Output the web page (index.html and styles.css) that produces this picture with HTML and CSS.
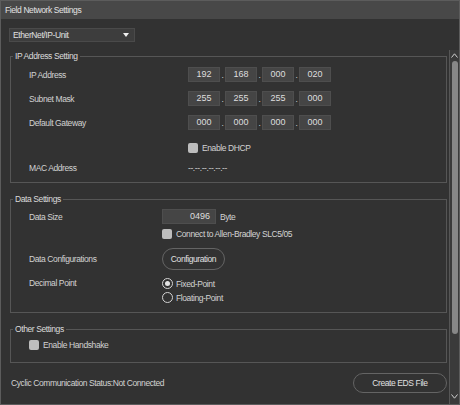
FILE: index.html
```html
<!DOCTYPE html>
<html>
  <head>
    <meta charset="UTF-8" />
    <title>Field Network Settings</title>
    <link rel="stylesheet" href="styles.css">
  </head>
  <body>
    <div class="window">
      <div class="titlebar">Field Network Settings</div>
      <div class="body">
        <div class="pane">
          <div class="select">
            <span>EtherNet/IP-Unit</span>
            <span class="caret"></span>
          </div>

          <fieldset class="group group-ip">
            <legend>IP Address Setting</legend>
            <div class="row row-field">
              <span class="label">IP Address</span>
              <div class="ip">
                <span class="octet">192</span><span class="dot">.</span><span class="octet">168</span><span class="dot">.</span><span class="octet">000</span><span class="dot">.</span><span class="octet">020</span>
              </div>
            </div>
            <div class="row row-field">
              <span class="label">Subnet Mask</span>
              <div class="ip">
                <span class="octet">255</span><span class="dot">.</span><span class="octet">255</span><span class="dot">.</span><span class="octet">255</span><span class="dot">.</span><span class="octet">000</span>
              </div>
            </div>
            <div class="row row-field">
              <span class="label">Default Gateway</span>
              <div class="ip">
                <span class="octet">000</span><span class="dot">.</span><span class="octet">000</span><span class="dot">.</span><span class="octet">000</span><span class="dot">.</span><span class="octet">000</span>
              </div>
            </div>
            <div class="row row-dhcp">
              <span class="label"></span>
              <span class="check"></span><span>Enable DHCP</span>
            </div>
            <div class="row row-mac">
              <span class="label">MAC Address</span>
              <span>--.--.--.--.--.--</span>
            </div>
          </fieldset>

          <fieldset class="group group-data">
            <legend>Data Settings</legend>
            <div class="row row-field">
              <span class="label">Data Size</span>
              <span class="numbox">0496</span><span class="unit">Byte</span>
            </div>
            <div class="row row-connect">
              <span class="label"></span>
              <span class="check"></span><span>Connect to Allen-Bradley SLC5/05</span>
            </div>
            <div class="row row-config">
              <span class="label">Data Configurations</span>
              <span class="pill pill-config">Configuration</span>
            </div>
            <div class="row row-decimal">
              <span class="label">Decimal Point</span>
              <div class="radios">
                <div class="radio-item"><span class="radio checked"></span>Fixed-Point</div>
                <div class="radio-item"><span class="radio"></span>Floating-Point</div>
              </div>
            </div>
          </fieldset>

          <fieldset class="group group-other">
            <legend>Other Settings</legend>
            <div class="row row-handshake">
              <span class="check"></span><span>Enable Handshake</span>
            </div>
          </fieldset>

          <div class="status-row">
            <span>Cyclic Communication Status:Not Connected</span>
            <span class="pill pill-eds">Create EDS File</span>
          </div>
        </div>

        <div class="scrollbar">
          <span class="arrow">
            <svg width="7" height="5" viewBox="0 0 7 5"><polyline points="0.5,4.5 3.5,0.8 6.5,4.5" fill="none" stroke="#d0d0d0" stroke-width="1"/></svg>
          </span>
          <div class="thumb"></div>
          <div class="track-rest"></div>
          <span class="arrow">
            <svg width="7" height="5" viewBox="0 0 7 5"><polyline points="0.5,0.5 3.5,4.2 6.5,0.5" fill="none" stroke="#d0d0d0" stroke-width="1"/></svg>
          </span>
        </div>
      </div>
    </div>
  </body>
</html>
```

FILE: styles.css
```css
body {
  margin: 0;
  background: #323232;
}

.window {
  width: 460px;
  height: 405px;
  box-sizing: border-box;
  border: 1px solid #5c5c5c;
  background: #323232;
  display: flex;
  flex-direction: column;
  font-family: "Liberation Sans", Arial, sans-serif;
  font-size: 8.5px;
  letter-spacing: -0.4px;
  color: #d2d2d2;
}

.titlebar {
  flex: none;
  height: 18px;
  line-height: 18px;
  padding-left: 4px;
  background: #484848;
  color: #e2e2e2;
}

.body {
  flex: 1;
  display: flex;
  min-height: 0;
}

.pane {
  flex: 1;
  padding: 9px 2px 0 8px;
}

/* dropdown */
.select {
  width: 126px;
  height: 14px;
  box-sizing: border-box;
  background: #3d3d3d;
  border: 1px solid #4a4a4a;
  display: flex;
  align-items: center;
  justify-content: space-between;
  padding: 0 5px 0 3px;
  color: #e0e0e0;
}

.caret {
  width: 0;
  height: 0;
  border-left: 3px solid transparent;
  border-right: 3px solid transparent;
  border-top: 4px solid #f0f0f0;
}

/* group boxes */
.group {
  margin: 9px 0 0 1px;
  padding: 6px 0 8px 2px;
  border: 1px solid #565656;
  min-width: 0;
}

.group legend {
  padding: 0 2px;
  line-height: 10px;
  height: 10px;
  color: #dcdcdc;
}

.group-data {
  margin-top: 11px;
  padding-top: 5px;
}

.group-other {
  margin-top: 11px;
  padding-top: 4px;
  padding-bottom: 10px;
}

.row {
  display: flex;
  align-items: center;
  padding-left: 16px;
}

.label {
  flex: none;
  width: 159px;
}

.group-data .label {
  width: 133px;
}

.row-field {
  height: 15px;
}

.row-field + .row-field {
  margin-top: 9px;
}

.row-dhcp {
  height: 12px;
  margin-top: 12px;
}

.row-mac {
  height: 12px;
  margin-top: 8px;
}

.row-connect {
  height: 14px;
  margin-top: 3px;
}

.row-config {
  height: 22px;
  margin-top: 7px;
}

.row-decimal {
  align-items: flex-start;
  margin-top: 7px;
}

.row-decimal .label {
  line-height: 13px;
}

.row-handshake {
  height: 14px;
}

/* inputs */
.ip {
  display: flex;
}

.octet,
.numbox {
  box-sizing: border-box;
  height: 15px;
  line-height: 13px;
  background: #454545;
  border: 1px solid #4e4e4e;
  color: #dedede;
  font-size: 9px;
  letter-spacing: 0;
}

.octet {
  width: 32px;
  text-align: center;
}

.dot {
  width: 5px;
  text-align: center;
  line-height: 17px;
  height: 15px;
}

.numbox {
  width: 54px;
  text-align: right;
  padding-right: 5px;
}

.unit {
  margin-left: 4px;
}

.check {
  flex: none;
  width: 10px;
  height: 10px;
  border-radius: 2px;
  background: #bdbdbd;
  margin-right: 4px;
}

.pill {
  box-sizing: border-box;
  display: flex;
  align-items: center;
  justify-content: center;
  border: 1px solid #646464;
  color: #e0e0e0;
}

.pill-config {
  width: 63px;
  height: 22px;
  border-radius: 11px;
}

.radios {
  display: flex;
  flex-direction: column;
  gap: 1px;
}

.radio-item {
  display: flex;
  align-items: center;
  height: 13px;
}

.radio {
  box-sizing: border-box;
  width: 11px;
  height: 11px;
  border: 1px solid #d4d4d4;
  border-radius: 50%;
  margin-right: 3px;
  display: flex;
  align-items: center;
  justify-content: center;
}

.radio.checked::after {
  content: "";
  width: 5px;
  height: 5px;
  border-radius: 50%;
  background: #e4e4e4;
}

/* footer */
.status-row {
  display: flex;
  align-items: center;
  justify-content: space-between;
  height: 20px;
  margin-top: 10px;
  padding-left: 2px;
}

.pill-eds {
  width: 94px;
  height: 20px;
  border-radius: 10px;
}

/* scrollbar */
.scrollbar {
  flex: none;
  width: 9px;
  margin-top: 31px;
  background: #3a3a3a;
  border-left: 1px solid #565656;
  display: flex;
  flex-direction: column;
  align-items: center;
  padding-bottom: 2px;
}

.arrow {
  height: 11px;
  display: flex;
  align-items: center;
}

.thumb {
  width: 6px;
  height: 273px;
  border-radius: 3px;
  background: #878787;
}

.track-rest {
  flex: 1;
}
```
